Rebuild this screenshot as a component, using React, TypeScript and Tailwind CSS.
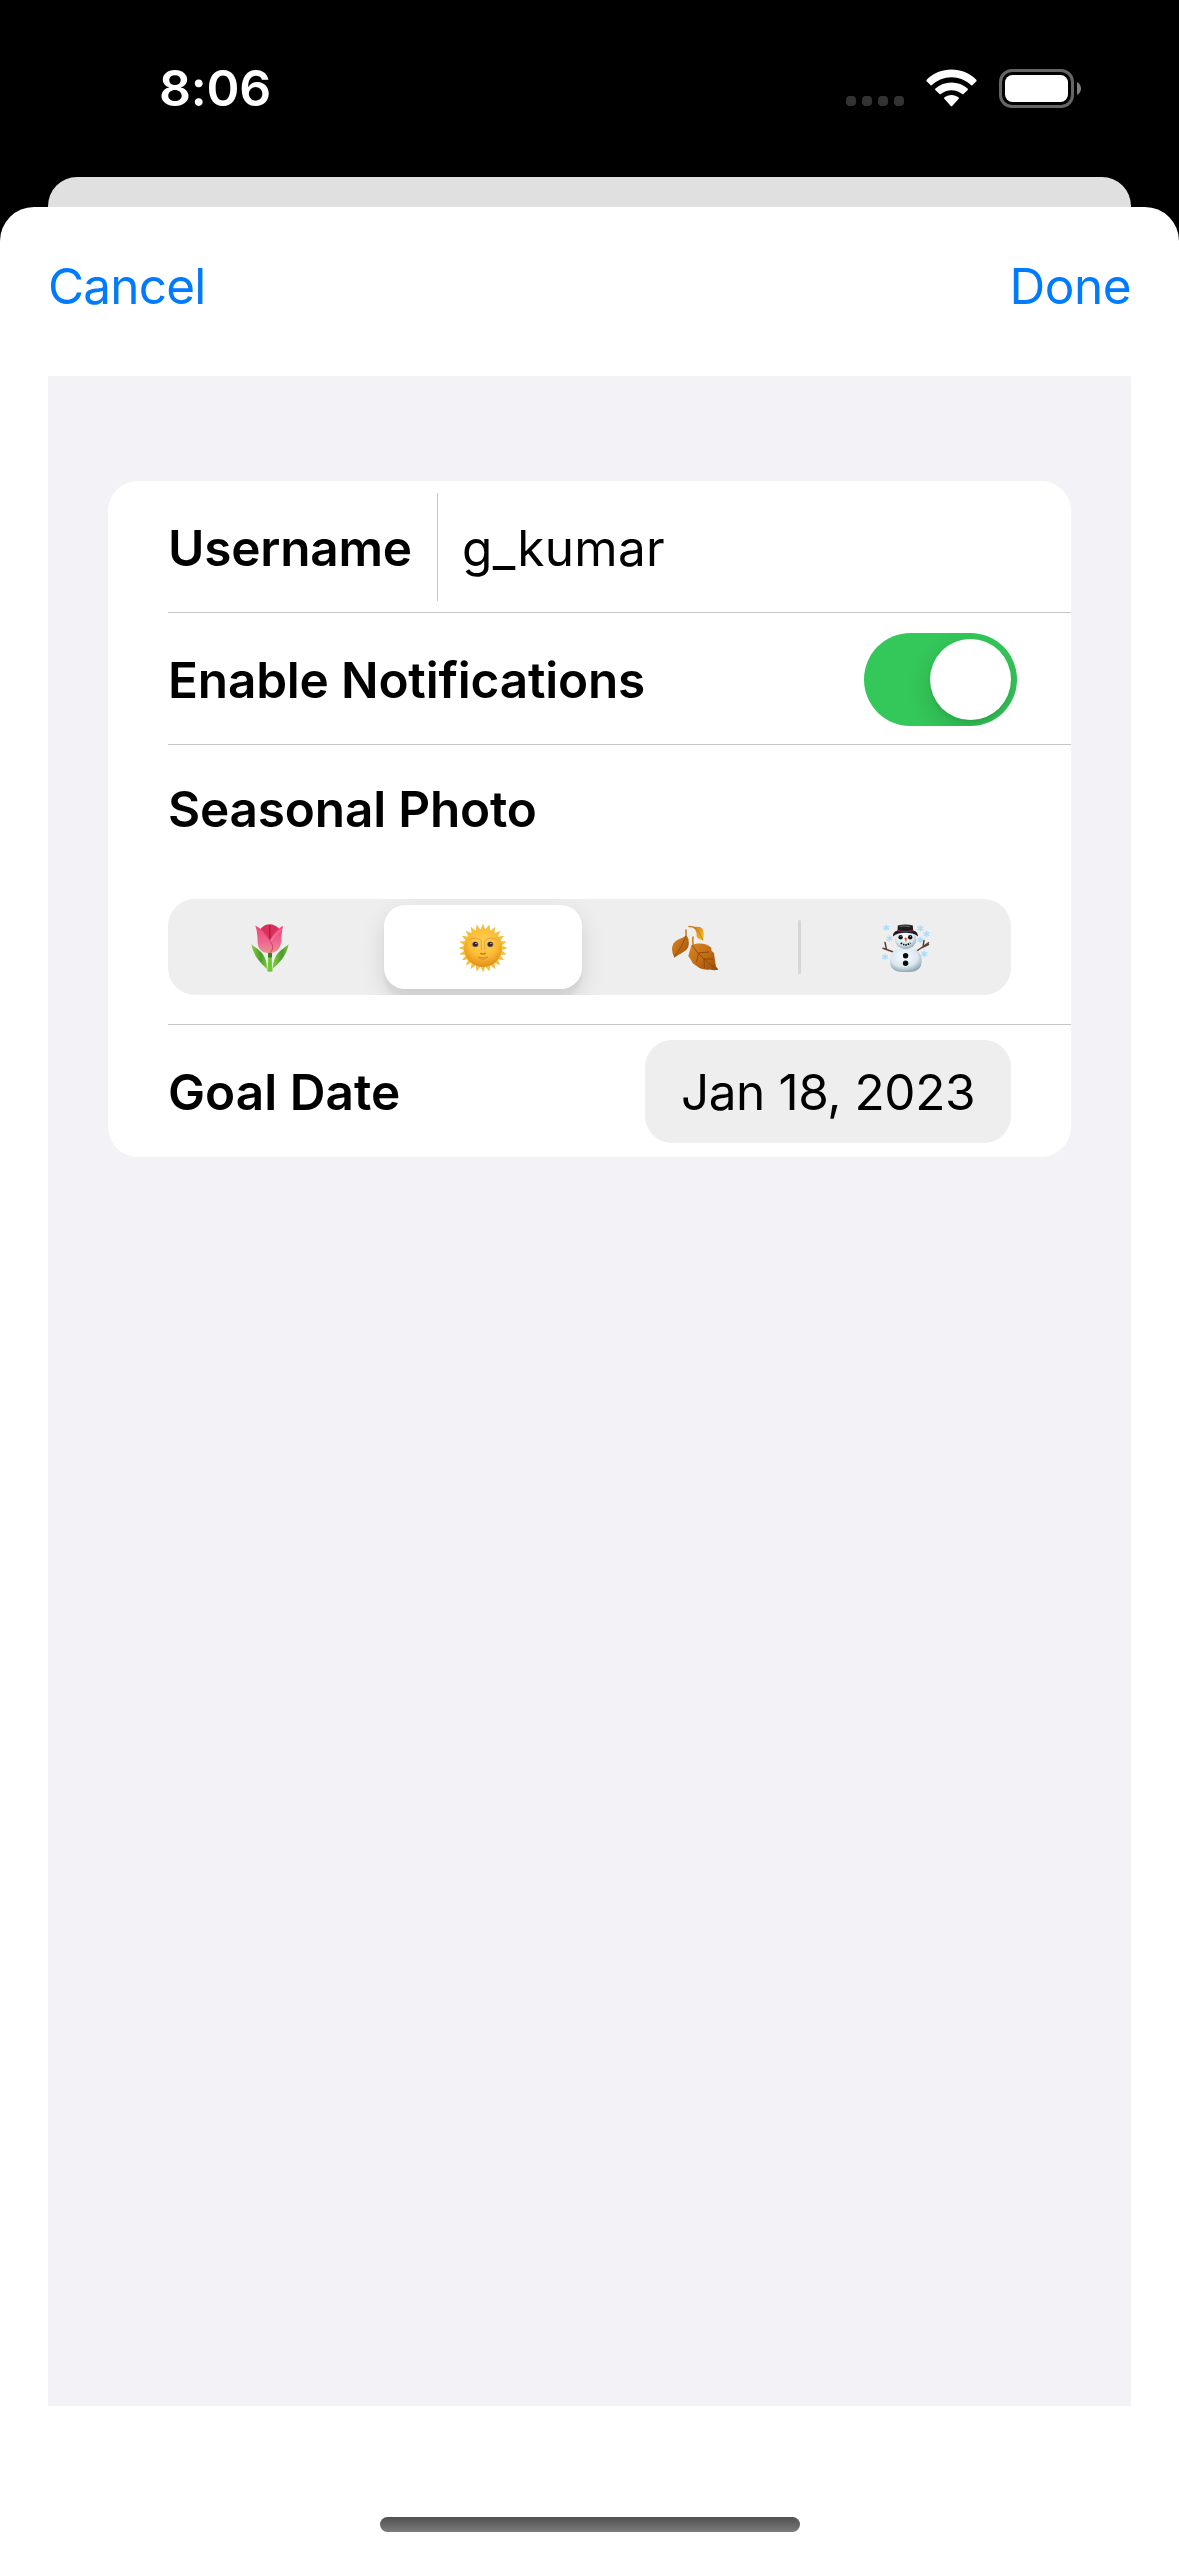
import React, { useState } from "react";

function StatusBar() {
  return (
    <div className="flex h-[177px] items-start justify-between pl-[159px] pr-[97px] pt-[58px]">
      <span className="text-[50px] font-semibold leading-[60px] tracking-[-0.2px] text-white">8:06</span>
      <div className="flex h-[60px] items-center">
        <div className="mr-[22px] mt-[26px] flex gap-[6px]">
          <span className="size-[10px] rounded-[4px] bg-[#333333]" />
          <span className="size-[10px] rounded-[4px] bg-[#333333]" />
          <span className="size-[10px] rounded-[4px] bg-[#333333]" />
          <span className="size-[10px] rounded-[4px] bg-[#333333]" />
        </div>
        <svg className="mr-[22px] h-[38px] w-[51px]" viewBox="0 0 51 38" fill="#fff" aria-label="Wi-Fi">
          <path d="M.6 12.2Q0 11.4.7 10.7C7.500 4.200 16.200.6 25.500.6S43.500 4.200 50.300 10.700Q51 11.400 50.400 12.200L46.300 16.200Q45.700 16.700 45 16.100C39.700 11.200 32.900 8.300 25.500 8.300S11.300 11.200 6 16.100Q5.300 16.700 4.700 16.200Z" />
          <path d="M9.300 20.900Q8.700 20.200 9.400 19.500C13.800 15.700 19.400 13.500 25.500 13.500S37.200 15.700 41.600 19.500Q42.300 20.200 41.700 20.900L37.500 25Q36.900 25.600 36.200 25C33.300 22.600 29.600 21.200 25.500 21.200S17.700 22.600 14.800 25Q14.100 25.600 13.500 25Z" />
          <path d="M18.300 29.800Q17.600 29.100 18.300 28.500C20.300 27 22.800 26.100 25.500 26.100S30.700 27 32.700 28.500Q33.400 29.100 32.700 29.800L26.200 37.100Q25.500 37.700 24.800 37.100Z" />
        </svg>
        <svg className="h-[39px] w-[83px]" viewBox="0 0 83 39" aria-label="Battery">
          <rect x="1.500" y="1.500" width="72" height="36" rx="11.500" fill="none" stroke="#666" strokeWidth="3" />
          <rect x="6" y="6" width="63" height="27" rx="7.500" fill="#fff" />
          <path d="M78 13C80.600 14.200 82 16.700 82 19.500S80.600 24.800 78 26Z" fill="#808080" />
        </svg>
      </div>
    </div>
  );
}

function Tulip() {
  return (
    <svg className="h-[48px] w-[38px]" viewBox="0 0 38 48" role="img" aria-label="Spring">
      <defs>
        <linearGradient id="petal" x1="0" y1="0" x2="0" y2="1">
          <stop offset="0" stopColor="#ee4577" />
          <stop offset=".55" stopColor="#ee6490" />
          <stop offset="1" stopColor="#ea918f" />
        </linearGradient>
        <linearGradient id="leafL" x1="0" y1="0" x2="1" y2="0">
          <stop offset="0" stopColor="#86cf45" />
          <stop offset=".6" stopColor="#4d9b2c" />
          <stop offset="1" stopColor="#75c93c" />
        </linearGradient>
      </defs>
      <path d="M.4 20C3 23 9 26 12.500 31Q16 37 16 45C11 40 2 32 .4 20Z" fill="url(#leafL)" />
      <path d="M37.600 20C35 23 29 26 25.500 31Q22 37 21.500 45C27 40 36 32 37.600 20Z" fill="url(#leafL)" />
      <path d="M17 27H21Q20.400 38 21.600 47.200Q19 48.500 16.200 47.200Q17.600 38 17 27Z" fill="#6bc936" />
      <path d="M17 29H21V33.500H17Z" fill="#397f25" />
      <path d="M9.500 5Q13 .3 18.500.3T28.500 5L26 18 19 24 11 18Z" fill="#d92f59" />
      <path d="M18.800 1V19" stroke="#a91d42" strokeWidth="1.300" />
      <path d="M4.300 1.500C8.500 3.500 15 9 19 16C22.500 9 28 4 32 1.700Q31 6 30.600 12C30.200 17 31 29 18.500 29C6.500 29 6.500 20 6.500 14Q6.400 7 4.300 1.500Z" fill="url(#petal)" />
      <path d="M13 9Q18 14 20 18.500Q24 24 19 28.600" stroke="#d13f69" strokeWidth="1" fill="none" />
      <path d="M30.500 5.500Q22 12 20 17.500" stroke="#f68ba9" strokeWidth=".8" fill="none" />
    </svg>
  );
}

const RAYS = Array.from({ length: 24 }, (_, i) => i * 15);

function Sun() {
  return (
    <svg className="size-[48px]" viewBox="0 0 48 48" role="img" aria-label="Summer">
      <defs>
        <radialGradient id="sunFace" cx=".5" cy=".36" r=".62">
          <stop offset="0" stopColor="#ffd259" />
          <stop offset=".6" stopColor="#fcbd35" />
          <stop offset="1" stopColor="#e5901c" />
        </radialGradient>
      </defs>
      {RAYS.map((angle) => (
        <path key={angle} d="M21.600 6.500L24 .4 26.400 6.500Z" fill="#f7c52c" stroke="#e8ab25" strokeWidth=".5" transform={`rotate(${angle} 24 24)`} />
      ))}
      <circle cx="24" cy="24" r="18.900" fill="url(#sunFace)" />
      <path d="M10 15.500Q17 12.500 22.300 16.500V26M38 15.500Q31 12.500 25.700 16.500V26" fill="none" stroke="#e3a03a" strokeWidth="1" />
      <ellipse cx="16.200" cy="20.400" rx="3.500" ry="2.700" fill="#c49762" />
      <ellipse cx="31.300" cy="20.400" rx="3.500" ry="2.700" fill="#c49762" />
      <circle cx="16.300" cy="20.300" r="2.500" fill="#2e2430" />
      <circle cx="31.200" cy="20.300" r="2.500" fill="#2e2430" />
      <circle cx="17" cy="19.600" r=".7" fill="#fff" />
      <circle cx="31.900" cy="19.600" r=".7" fill="#fff" />
      <path d="M21.300 29Q24 31.300 26.700 29" fill="none" stroke="#b9711c" strokeWidth="1.200" />
      <path d="M19 33Q24 34.500 29 33Q24 37.500 19 33Z" fill="#f0a83f" stroke="#d08a2c" strokeWidth=".8" />
    </svg>
  );
}

function Leaves() {
  return (
    <svg className="h-[46px] w-[48px]" viewBox="0 0 48 46" role="img" aria-label="Autumn">
      <defs>
        <linearGradient id="leafA" x1="0" y1="0" x2="1" y2="1">
          <stop offset="0" stopColor="#d9862a" />
          <stop offset=".5" stopColor="#c06d14" />
          <stop offset="1" stopColor="#9b4c0c" />
        </linearGradient>
        <linearGradient id="leafB" x1="0" y1="0" x2="1" y2="1">
          <stop offset="0" stopColor="#d37b17" />
          <stop offset="1" stopColor="#f8c72c" />
        </linearGradient>
      </defs>
      <path d="M15 5V11M22 12Q21 16 22.500 21M18 1.500Q21.500 1.500 24 3" fill="none" stroke="#c97f28" strokeWidth="1.600" strokeLinecap="round" />
      <path d="M15.500 10.300Q18.500 14 17.600 20.500C16.800 26.500 9 28 3.300 32.800Q-.5 25 2 19.500C4 14.500 11 14 15.500 10.300Z" fill="url(#leafA)" />
      <path d="M15.200 11Q11 22 3.300 32" fill="none" stroke="#8f480c" strokeWidth=".9" />
      <path d="M22.500 1.800C27 2 31 1.300 32.300 5.500Q33.500 10 32 15.800Q26.500 14 25.700 11.500Q26 6.500 22.500 1.800Z" fill="url(#leafB)" />
      <path d="M22.500 2Q29 6.500 31.800 15" fill="none" stroke="#bb7212" strokeWidth=".8" />
      <path d="M20.500 20C27 17.500 36 18 40.500 23L40.300 25.500 43 28Q44 35 44.500 39Q44.500 42 47.400 44.500Q43 45.800 39 44.600Q31 45 27 42L25.600 41 22 38.500 19.700 34.500 17.300 31Q19 25 20.500 20Z" fill="url(#leafA)" />
      <path d="M21 20Q30 34 46.500 44.500M27.500 28L38 27M33 34L42.300 34M27.500 28L25.500 37M33 34L33.500 43" fill="none" stroke="#8e460a" strokeWidth=".9" />
    </svg>
  );
}

const FLAKES: [number, number][] = [[4.300, 3.800], [7.500, 14.500], [3, 33], [38.300, 4.500], [44.500, 10], [38.300, 16], [42.300, 30]];

function Snowman() {
  return (
    <svg className="size-[48px]" viewBox="0 0 48 48" role="img" aria-label="Winter">
      <defs>
        <radialGradient id="snow" cx=".45" cy=".35" r=".65">
          <stop offset="0" stopColor="#f7fcff" />
          <stop offset=".65" stopColor="#dbe8ef" />
          <stop offset="1" stopColor="#91aab8" />
        </radialGradient>
      </defs>
      {FLAKES.map(([x, y]) => (
        <g key={`${x}-${y}`} transform={`translate(${x} ${y})`} stroke="#acdcfa" strokeWidth="1.300">
          <circle r="1.700" fill="#c5e8fd" stroke="none" />
          <path d="M0-3.300V3.300M-2.900-1.600 2.900 1.600M-2.900 1.600 2.900-1.600" />
        </g>
      ))}
      <path d="M12 28.300L1 24.200M4.500 25.300L3 18.500M34 27.500L46.500 18.800M41 22.800L42 16.500M40 23.500L46.500 20.500" fill="none" stroke="#5d4034" strokeWidth="1.500" strokeLinecap="round" />
      <path d="M12.500 26Q24 23.500 34.500 26Q40 30 39.600 38Q39 46 32 47.400Q24 48.500 16 47.400Q8.500 46 8 38Q8 30 12.500 26Z" fill="url(#snow)" />
      <ellipse cx="23.600" cy="15.500" rx="10.700" ry="9.700" fill="url(#snow)" />
      <path d="M15.500 6.500L15.800 1.500Q23.500-.6 30.800 1.500L31.200 6.500Q36 7.500 36 12.500Q34 10.500 30.500 9.500Q23 8 16.500 9.500Q13 10.500 11 12.500Q10.500 8 15.500 6.500Z" fill="#1d1c20" />
      <path d="M15.500 6.700Q23.500 8.700 31.200 6.700" stroke="#a02b38" strokeWidth="1" fill="none" />
      <path d="M17.500 2.500Q22 1.500 28 2.500" stroke="#59575c" strokeWidth="1.300" />
      <circle cx="18.600" cy="13.200" r="2.200" fill="#111" />
      <circle cx="28.200" cy="13.200" r="2.200" fill="#111" />
      <circle cx="18.900" cy="12.600" r=".5" fill="#bbb" />
      <circle cx="28.500" cy="12.600" r=".5" fill="#bbb" />
      <path d="M22.300 14Q23.600 13 25 14L24 18.600Z" fill="#e8542a" />
      <path d="M18.700 18.800Q23.500 22.800 28.500 18.800" fill="none" stroke="#161616" strokeWidth="1.700" strokeDasharray="1.600 .9" />
      <circle cx="23.600" cy="31.800" r="2.700" fill="#0b0b0b" />
      <circle cx="23.600" cy="39.300" r="2.700" fill="#0b0b0b" />
    </svg>
  );
}

const SEASONS = [
  { id: "spring", Icon: Tulip, style: "w-[204px] pt-[2px]" },
  { id: "summer", Icon: Sun, style: "w-[198px] pt-[1px]" },
  { id: "autumn", Icon: Leaves, style: "w-[216px] pl-[10px] pt-[1px]" },
  { id: "winter", Icon: Snowman, style: "w-[210px] pt-[2px]" },
];

function SeasonPicker() {
  const [selected, setSelected] = useState("summer");
  return (
    <div className="mr-[60px] flex h-[96px] overflow-hidden rounded-[27px] bg-[#eeeeee]">
      {SEASONS.map(({ id, Icon, style }, i) => (
        <React.Fragment key={id}>
          {i === 1 && <span className="w-[12px]" />}
          {i === 3 && <span className="mt-[21px] h-[54px] w-[3px] rounded-full bg-[#d6d6d7]" />}
          <button
            onClick={() => setSelected(id)}
            className={`${style} flex items-center justify-center ${
              selected === id ? "my-[6px] rounded-[21px] bg-white shadow-[0_9px_24px_rgba(0,0,0,0.12),0_9px_3px_rgba(0,0,0,0.04)]" : ""
            }`}
          >
            <Icon />
          </button>
        </React.Fragment>
      ))}
    </div>
  );
}

function Toggle() {
  const [on, setOn] = useState(true);
  return (
    <button
      role="switch"
      aria-checked={on}
      onClick={() => setOn(!on)}
      className={`mr-[54px] mt-[2px] flex h-[93px] w-[153px] items-center overflow-hidden rounded-full px-[6px] ${
        on ? "justify-end bg-[#34c759]" : "justify-start bg-[#e9e9ea]"
      }`}
    >
      <span className="size-[81px] rounded-full bg-white shadow-[0_9px_24px_rgba(0,0,0,0.15),0_3px_3px_rgba(0,0,0,0.06)]" />
    </button>
  );
}

export default function App() {
  return (
    <div className="flex h-[2556px] w-[1179px] flex-col overflow-hidden bg-black font-[Inter,sans-serif] text-[49.500px] leading-[60px] text-black">
      <StatusBar />
      <div className="mx-[48px] h-[30px] shrink-0 rounded-t-[29px] bg-[#e0e0e0]" />
      <div className="flex flex-1 flex-col rounded-t-[34px] bg-white">
        <header className="flex h-[169px] items-center justify-between pb-[11px] pl-[48px] pr-[48px] text-[#007aff]">
          <button className="tracking-[-0.800px]">Cancel</button>
          <button className="tracking-[-0.500px]">Done</button>
        </header>
        <main className="mx-[48px] h-[2030px] bg-[#f2f2f7] px-[60px] pt-[105px]">
          <div className="h-[676px] rounded-[30px] bg-white pl-[60px]">
            <div className="flex h-[132px] items-center border-b border-[#c6c6c8]">
              <span className="w-[269px] pt-[3px] font-semibold tracking-[-0.220px]">Username</span>
              <span className="h-[108px] w-px bg-[#c6c6c8]" />
              <span className="pl-[24px] pt-[3px] tracking-[0.300px]">g_kumar</span>
            </div>
            <div className="flex h-[132px] items-center justify-between border-b border-[#c6c6c8]">
              <span className="pt-[3px] font-semibold tracking-[-0.180px]">Enable Notifications</span>
              <Toggle />
            </div>
            <div className="h-[280px] border-b border-[#c6c6c8] pt-[34px]">
              <div className="mb-[60px] font-semibold tracking-[-0.180px]">Seasonal Photo</div>
              <SeasonPicker />
            </div>
            <div className="flex h-[132px] items-center justify-between pr-[60px]">
              <span className="pt-[2px] font-semibold tracking-[0.040px]">Goal Date</span>
              <button className="flex h-[103px] w-[366px] items-center justify-center rounded-[27px] bg-[#eeeeef] pt-[1px] tracking-[-0.420px]">
                Jan 18, 2023
              </button>
            </div>
          </div>
        </main>
        <div className="mx-auto mt-[111px] h-[15px] w-[420px] rounded-full bg-gradient-to-b from-[#505050] to-[#7c7c7c]" />
      </div>
    </div>
  );
}
